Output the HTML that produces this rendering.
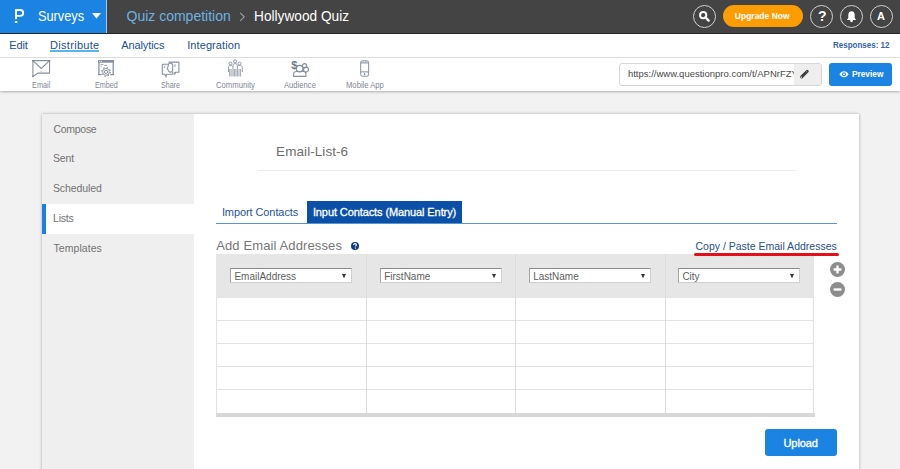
<!DOCTYPE html>
<html><head><meta charset="utf-8">
<style>
*{margin:0;padding:0;box-sizing:border-box}
html,body{width:900px;height:469px;overflow:hidden;background:#f2f2f2;font-family:"Liberation Sans",sans-serif}
.a{position:absolute}
.t{position:absolute;line-height:1;white-space:nowrap}
.sel{width:122px;height:14.5px;background:#fff;border:1px solid #cfcfcf;border-top-color:#8c8c8c;border-left-color:#a5a5a5}
</style></head><body>
<div class="a" style="left:0;top:0;width:900px;height:34px;background:#444444;border-bottom:1px solid #262626"></div>
<div class="a" style="left:0;top:0;width:106px;height:33px;background:#1b84e2"></div>
<div class="a" style="left:106px;top:0;width:1px;height:33px;background:#9ccbf2"></div>
<svg class="a" style="left:10px;top:5px" width="20" height="22" viewBox="0 0 20 22">
<path d="M6 5H10.2C12.8 5 13.2 6.7 13.2 7.95C13.2 9.3 12.8 10.85 10.2 10.85H6M6 4.1V14.3" fill="none" stroke="#fff" stroke-width="1.85"/>
<rect x="4.9" y="16" width="2.4" height="1.9" fill="#fff"/></svg>
<span id="t_surveys" class="t" style="left:37.8px;top:9px;font-size:14px;color:#fff;transform:scaleX(0.91);transform-origin:0 0">Surveys</span>
<svg class="a" style="left:92px;top:13px" width="9" height="6" viewBox="0 0 9 6"><path d="M0 0H9L4.5 5.5Z" fill="#fff"/></svg>
<span id="t_quiz" class="t" style="left:126.5px;top:9px;font-size:14px;color:#6cb2e0">Quiz competition</span>
<svg class="a" style="left:239px;top:12px" width="7" height="10" viewBox="0 0 7 10"><path d="M1.2 0.8L5.2 4.8L1.2 8.8" fill="none" stroke="#a0a0a0" stroke-width="1.1"/></svg>
<span id="t_holly" class="t" style="left:254.4px;top:9px;font-size:14px;color:#fff;transform:scaleX(0.977);transform-origin:0 0">Hollywood Quiz</span>
<div class="a" style="left:693px;top:5px;width:23px;height:23px;border:1.3px solid #d0d0d0;border-radius:50%"></div>
<svg class="a" style="left:698px;top:10px" width="13" height="13" viewBox="0 0 13 13"><circle cx="5.2" cy="5.2" r="3.1" fill="none" stroke="#fff" stroke-width="2"/><path d="M7.4 7.4L10.6 10.6" stroke="#fff" stroke-width="2.4" stroke-linecap="round"/></svg>
<div class="a" style="left:723px;top:5px;width:80px;height:22px;border-radius:11px;background:#fe9c03"></div>
<span id="t_upg" class="t" style="left:734.8px;top:12px;font-size:8.5px;color:#fff;font-weight:bold">Upgrade Now</span>
<div class="a" style="left:810px;top:5px;width:23px;height:23px;border:1.3px solid #d0d0d0;border-radius:50%"></div>
<span class="t" style="left:818px;top:9px;font-size:14px;color:#fff;font-weight:bold">?</span>
<div class="a" style="left:840px;top:5px;width:23px;height:23px;border:1.3px solid #d0d0d0;border-radius:50%"></div>
<svg class="a" style="left:845px;top:10px" width="13" height="13" viewBox="0 0 13 13"><path d="M6.5 1.3C4.4 1.3 3.3 3 3.3 5V8L1.9 10H11.1L9.7 8V5C9.7 3 8.6 1.3 6.5 1.3Z" fill="#fff"/><circle cx="6.5" cy="10.8" r="1.4" fill="#fff"/></svg>
<div class="a" style="left:870px;top:5px;width:23px;height:23px;border:1.3px solid #d0d0d0;border-radius:50%"></div>
<span class="t" style="left:877px;top:11px;font-size:11px;color:#fff;font-weight:bold">A</span>
<div class="a" style="left:0;top:34px;width:900px;height:24px;background:#fff;border-bottom:1px solid #e4e4e4"></div>
<span id="t_edit" class="t" style="left:9.2px;top:40px;font-size:11px;color:#21508f;letter-spacing:-0.1px">Edit</span>
<span id="t_dist" class="t" style="left:50.1px;top:40px;font-size:11px;color:#21508f;letter-spacing:0.29px">Distribute</span>
<div class="a" style="left:50px;top:50px;width:48.5px;height:2px;background:#5cb5e8"></div>
<span id="t_anal" class="t" style="left:121.2px;top:40px;font-size:11px;color:#21508f;letter-spacing:-0.09px">Analytics</span>
<span id="t_integ" class="t" style="left:187.2px;top:40px;font-size:11px;color:#21508f;letter-spacing:0.09px">Integration</span>
<span id="t_resp" class="t" style="left:832.8px;top:41px;font-size:8.5px;color:#3563a8;transform:scaleX(0.94);transform-origin:0 0;font-weight:bold">Responses: 12</span>
<div class="a" style="left:0;top:58px;width:900px;height:33px;background:#fff;box-shadow:0 1px 2.5px rgba(0,0,0,.28)"></div>
<span id="t_email" class="t" style="left:31.6px;top:81px;font-size:8.5px;color:#7f8894;transform:scaleX(0.86);transform-origin:0 0">Email</span>
<span id="t_embed" class="t" style="left:94.8px;top:81px;font-size:8.5px;color:#7f8894;transform:scaleX(0.85);transform-origin:0 0">Embed</span>
<span id="t_share" class="t" style="left:160.6px;top:81px;font-size:8.5px;color:#7f8894;transform:scaleX(0.83);transform-origin:0 0">Share</span>
<span id="t_comm" class="t" style="left:215.8px;top:81px;font-size:8.5px;color:#7f8894;transform:scaleX(0.905);transform-origin:0 0">Community</span>
<span id="t_aud" class="t" style="left:284.2px;top:81px;font-size:8.5px;color:#7f8894;transform:scaleX(0.9);transform-origin:0 0">Audience</span>
<span id="t_mob" class="t" style="left:345.6px;top:81px;font-size:8.5px;color:#7f8894;transform:scaleX(0.9);transform-origin:0 0">Mobile App</span>
<svg class="a" style="left:31px;top:59px" width="21" height="19" viewBox="0 0 21 19" fill="none" stroke="#86909c" stroke-width="1.1">
<path d="M1.9 1.65H18.55V14.15H7L1.9 17.4Z"/><path d="M1.9 1.65L10.3 9.4L18.55 1.65"/><path d="M9.4 12.4H11.2" stroke-width="0.5"/><circle cx="1.9" cy="1.7" r="0.7" fill="#6f7986" stroke="none"/><circle cx="18.5" cy="1.7" r="0.7" fill="#6f7986" stroke="none"/><circle cx="2" cy="17.3" r="0.7" fill="#6f7986" stroke="none"/></svg>
<svg class="a" style="left:97px;top:59px" width="18" height="19" viewBox="0 0 18 19" fill="none" stroke="#86909c">
<path d="M1.9 15.7V1.8H16.2V15.7" stroke-width="1.3"/><rect x="1.1" y="1.1" width="15.9" height="2.6" fill="#86909c" stroke="none"/>
<path d="M1.1 15.7H4.6M13.4 15.7H17" stroke-width="1.2"/>
<path d="M2.3 2.4H3.3M3.9 2.4H4.9" stroke="#fff" stroke-width="0.9"/>
<path d="M3.5 5.6H6.5M3.5 7.2H4.8M7.2 6.4H10" stroke-width="0.8"/>
<circle cx="9" cy="12.9" r="4.8" fill="#fff" stroke="none"/>
<circle cx="9" cy="12.9" r="4.3" stroke-width="1.1" stroke-dasharray="1.5 1.88"/><circle cx="9" cy="12.9" r="3.4" stroke-width="0.9"/><circle cx="9" cy="12.9" r="1.6" stroke-width="1"/></svg>
<svg class="a" style="left:161px;top:60.5px" width="19" height="17" viewBox="0 0 19 17" fill="none" stroke="#86909c" stroke-width="1.1">
<path d="M7.5 1.1H17.9V11.3H14.7L13.6 13.6V11.3"/><path d="M1.3 3.2H7.6M1.3 3.2V13.3H3.9L5 15.6L5.8 13.3H11.8V11"/>
<path d="M8.3 2.3C7 3 7.2 5.2 6.8 6.6L6.2 7.6L7.1 8.6C7 10 8 11.2 9.8 11.1C11.4 11 11.8 9.5 11.6 8.2C11.6 6.5 12 6 11.7 4.2C11.4 2.6 10 1.9 8.3 2.3Z"/>
<path d="M2.9 5.2H4.6M2.9 6.5H4M13.2 4H15.2M13.2 5.3H14.4" stroke-width="0.8"/></svg>
<svg class="a" style="left:227px;top:59px" width="17" height="19" viewBox="0 0 17 19" fill="none" stroke="#86909c" stroke-width="0.9">
<circle cx="3.5" cy="4.5" r="1.45"/><circle cx="8.1" cy="2.4" r="1.55"/><circle cx="12.5" cy="4.5" r="1.45"/>
<path d="M1.5 13V8.2C1.5 7 2.3 6.5 3.5 6.5C4.5 6.5 5.3 6.9 5.6 7.6"/><path d="M15.3 13V8.2C15.3 7 14.5 6.5 12.5 6.5C11.5 6.5 10.8 6.9 10.5 7.6"/>
<path d="M6 17.5V6.6C6 5.2 6.8 4.6 8.1 4.6C9.4 4.6 10.3 5.2 10.3 6.6V17.5"/>
<path d="M2.6 10V17.5M4.1 10V17.5M7.4 10V17.5M8.9 10V17.5M12 10V17.5M13.6 10V17.5" stroke-width="0.8"/></svg>
<svg class="a" style="left:290px;top:59px" width="21" height="19" viewBox="0 0 21 19" fill="none" stroke="#86909c" stroke-width="1.1">
<text x="1.2" y="9.8" font-family="Liberation Sans" font-size="11" font-weight="bold" fill="#6f7986" stroke="none">$</text>
<circle cx="9.6" cy="9.6" r="3.3" stroke-width="1.2"/><circle cx="14.6" cy="6.7" r="2.1"/><circle cx="16" cy="10.6" r="2.5"/>
<path d="M3.6 17.4V15C3.6 13.3 5 12.5 6.5 12.5H13.5C15 12.5 15.9 13.5 15.9 15V17.4Z"/></svg>
<svg class="a" style="left:359px;top:59px" width="12" height="19" viewBox="0 0 12 19" fill="none" stroke="#86909c" stroke-width="1">
<rect x="1.7" y="1.85" width="7.95" height="15.35" rx="1.7"/><path d="M1.7 3.9H9.65M1.7 12.9H9.65"/><path d="M3.6 3H4.9M6.3 3H7.7" stroke-width="0.8"/><circle cx="5.6" cy="15.1" r="0.55" fill="#86909c"/></svg>
<div class="a" style="left:619px;top:63px;width:203px;height:23px;border:1px solid #d6d6d6;border-radius:3px;background:#fff;overflow:hidden"><span id="t_url" class="t" style="left:7.9px;top:5px;font-size:9.5px;color:#4a4a4a">https://www.questionpro.com/t/APNrFZYx</span><div class="a" style="left:174px;top:0;width:28px;height:21px;background:#eeeeee"></div></div>
<svg class="a" style="left:799px;top:69px" width="11" height="11" viewBox="0 0 11 11"><path d="M2.6 7.9L8.3 2.2" stroke="#3d3d3d" stroke-width="2.9" stroke-linecap="round"/><path d="M7.3 2.5L8 3.2" stroke="#eee" stroke-width="0.6"/><circle cx="2.4" cy="8.1" r="0.6" fill="#fff"/></svg>
<div class="a" style="left:829px;top:63px;width:63px;height:22.5px;border-radius:3px;background:#1b84e2"></div>
<svg class="a" style="left:838.5px;top:71px" width="10" height="6.5" viewBox="0 0 10 6.5"><path d="M0.4 3.25C1.6 1.2 3.1 0.3 5 0.3C6.9 0.3 8.4 1.2 9.6 3.25C8.4 5.3 6.9 6.2 5 6.2C3.1 6.2 1.6 5.3 0.4 3.25Z" fill="#fff"/><circle cx="5" cy="3.25" r="2" fill="#1b84e2"/><circle cx="5" cy="3.25" r="1" fill="#fff"/></svg>
<span id="t_prev" class="t" style="left:852.2px;top:70px;font-size:8.5px;color:#fff;transform:scaleX(0.975);transform-origin:0 0;font-weight:bold">Preview</span>
<div class="a" style="left:42px;top:114px;width:817px;height:400px;background:#fff;box-shadow:0 0 3px rgba(0,0,0,.3)"></div>
<div class="a" style="left:42px;top:114px;width:152px;height:400px;background:#efefef"></div>
<div class="a" style="left:42px;top:203.5px;width:152px;height:30px;background:#fff"></div>
<div class="a" style="left:42px;top:203.5px;width:4px;height:30px;background:#1a80e4"></div>
<span id="t_comp" class="t" style="left:53.4px;top:124px;font-size:10.5px;color:#727272;letter-spacing:-0.27px">Compose</span>
<span id="t_sent" class="t" style="left:52.9px;top:153px;font-size:10.5px;color:#727272;letter-spacing:-0.1px">Sent</span>
<span id="t_sch" class="t" style="left:52.9px;top:183px;font-size:10.5px;color:#727272;letter-spacing:-0.08px">Scheduled</span>
<span id="t_lists" class="t" style="left:53px;top:213px;font-size:10.5px;color:#727272;letter-spacing:-0.2px">Lists</span>
<span id="t_tmpl" class="t" style="left:53.5px;top:243px;font-size:10.5px;color:#727272;letter-spacing:0.06px">Templates</span>
<span id="t_elist" class="t" style="left:276.1px;top:145px;font-size:13.5px;color:#6e6e6e;letter-spacing:0.07px">Email-List-6</span>
<div class="a" style="left:257px;top:169.5px;width:539px;height:1px;background:#ebebf2"></div>
<span id="t_imp" class="t" style="left:221.9px;top:207px;font-size:11px;color:#2a5597;letter-spacing:-0.09px">Import Contacts</span>
<div class="a" style="left:307px;top:201px;width:155px;height:22.5px;background:#0b4fa7"></div>
<span id="t_inp" class="t" style="left:312.9px;top:207px;font-size:11px;color:#fff;letter-spacing:-0.1px;-webkit-text-stroke:0.3px #fff">Input Contacts (Manual Entry)</span>
<div class="a" style="left:216px;top:223px;width:621px;height:1px;background:#5893d4"></div>
<span id="t_add" class="t" style="left:216.2px;top:239px;font-size:13px;color:#777777;letter-spacing:0.12px">Add Email Addresses</span>
<svg class="a" style="left:351px;top:242px" width="8" height="8" viewBox="0 0 8 8"><circle cx="4" cy="4" r="4" fill="#113d7c"/><path d="M2.6 3C2.6 2.1 3.2 1.6 4 1.6C4.8 1.6 5.4 2.1 5.4 2.8C5.4 3.6 4.4 3.8 4.4 4.6" fill="none" stroke="#fff" stroke-width="1.1"/><rect x="3.8" y="5.5" width="1.2" height="1.1" fill="#fff"/></svg>
<span id="t_cp" class="t" style="left:695.5px;top:241px;font-size:10.5px;color:#2a5090">Copy / Paste Email Addresses</span>
<div class="a" style="left:216px;top:254px;width:598px;height:159px;background:#fff;border-left:1px solid #e2e2e2;border-right:1px solid #e2e2e2"></div>
<div class="a" style="left:216px;top:254px;width:598px;height:43.5px;background:#e6e6e6"></div>
<div class="a" style="left:216px;top:320px;width:598px;height:1px;background:#e3e3e3"></div>
<div class="a" style="left:216px;top:343px;width:598px;height:1px;background:#e3e3e3"></div>
<div class="a" style="left:216px;top:366px;width:598px;height:1px;background:#e3e3e3"></div>
<div class="a" style="left:216px;top:389px;width:598px;height:1px;background:#e3e3e3"></div>
<div class="a" style="left:366px;top:254px;width:1px;height:159px;background:#dddddd"></div>
<div class="a" style="left:515px;top:254px;width:1px;height:159px;background:#dddddd"></div>
<div class="a" style="left:665px;top:254px;width:1px;height:159px;background:#dddddd"></div>
<div class="a" style="left:216px;top:412.5px;width:599px;height:4.5px;background:#d8d8d8"></div>
<div class="a sel" style="left:230px;top:268px"></div>
<span id="t_sel0" class="t" style="left:234.4px;top:272px;font-size:10px;color:#5e5e5e">EmailAddress</span>
<svg class="a" style="left:342px;top:273.8px" width="4" height="4.4" viewBox="0 0 4 4.4"><path d="M0 0H4L2 4.4Z" fill="#3a3a3a"/></svg>
<div class="a sel" style="left:379.8px;top:268px"></div>
<span id="t_sel1" class="t" style="left:384.2px;top:272px;font-size:10px;color:#5e5e5e">FirstName</span>
<svg class="a" style="left:491.8px;top:273.8px" width="4" height="4.4" viewBox="0 0 4 4.4"><path d="M0 0H4L2 4.4Z" fill="#3a3a3a"/></svg>
<div class="a sel" style="left:528.8px;top:268px"></div>
<span id="t_sel2" class="t" style="left:533.1999999999999px;top:272px;font-size:10px;color:#5e5e5e">LastName</span>
<svg class="a" style="left:640.8px;top:273.8px" width="4" height="4.4" viewBox="0 0 4 4.4"><path d="M0 0H4L2 4.4Z" fill="#3a3a3a"/></svg>
<div class="a sel" style="left:678px;top:268px"></div>
<span id="t_sel3" class="t" style="left:682.4px;top:272px;font-size:10px;color:#5e5e5e">City</span>
<svg class="a" style="left:790px;top:273.8px" width="4" height="4.4" viewBox="0 0 4 4.4"><path d="M0 0H4L2 4.4Z" fill="#3a3a3a"/></svg>
<svg class="a" style="left:830px;top:262px" width="15" height="15" viewBox="0 0 15 15"><circle cx="7.5" cy="7.5" r="7.5" fill="#8d8d8d"/><path d="M7.5 3.6V11.4M3.6 7.5H11.4" stroke="#fff" stroke-width="2.3"/></svg>
<svg class="a" style="left:830px;top:281.5px" width="15" height="15" viewBox="0 0 15 15"><circle cx="7.5" cy="7.5" r="7.5" fill="#8d8d8d"/><path d="M3.6 7.5H11.4" stroke="#fff" stroke-width="2.3"/></svg>
<div class="a" style="left:694px;top:252.5px;z-index:2;width:145px;height:3.1px;border-radius:1.6px;background:#e3101c"></div>
<div class="a" style="left:765px;top:429px;width:72px;height:27px;border-radius:3px;background:#1b84e2"></div>
<span id="t_upl" class="t" style="left:783.5px;top:438px;font-size:11px;color:#fff;letter-spacing:-0.08px;-webkit-text-stroke:0.35px #fff">Upload</span>
</body></html>
